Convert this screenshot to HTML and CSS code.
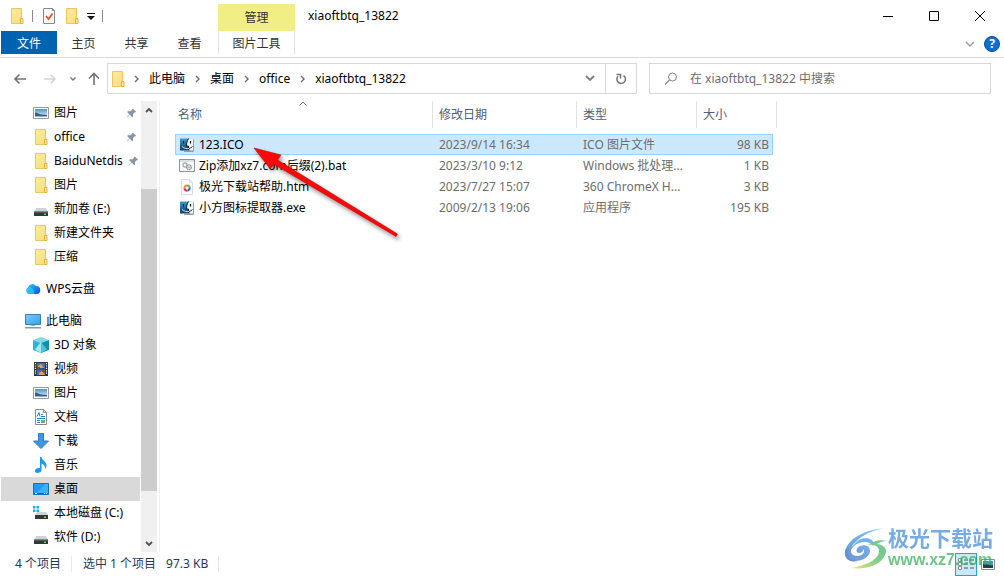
FILE: index.html
```html
<!DOCTYPE html>
<html lang="zh-CN">
<head>
    <meta charset="UTF-8">
    <meta name="viewport" content="width=device-width, initial-scale=1.0">
    <title>xiaoftbtq_13822</title>
    <link rel="stylesheet" href="styles.css">
</head>
<body>
    <!-- Shared icons -->
    <svg class="sprite" aria-hidden="true">
        <defs>
            <linearGradient id="gFolder" x1="0" y1="0" x2="1" y2="1">
                <stop offset="0" stop-color="#ffeaa3"/><stop offset="1" stop-color="#fcdc7c"/>
            </linearGradient>
            <linearGradient id="gCloud" x1="0" y1="0" x2="1" y2="1">
                <stop offset="0" stop-color="#27d3f5"/><stop offset="1" stop-color="#1447e6"/>
            </linearGradient>
            <linearGradient id="gScreen" x1="0" y1="0" x2="1" y2="1">
                <stop offset="0" stop-color="#7ccbfb"/><stop offset="1" stop-color="#2fa3f2"/>
            </linearGradient>
            <linearGradient id="gSky" x1="0" y1="0" x2="0" y2="1">
                <stop offset="0" stop-color="#4d92d8"/><stop offset="1" stop-color="#eaf4fb"/>
            </linearGradient>
            <linearGradient id="gFinder" x1="0" y1="0" x2="0" y2="1">
                <stop offset="0" stop-color="#3f9ccb"/><stop offset="1" stop-color="#0d3f66"/>
            </linearGradient>
            <linearGradient id="gSwirl" x1="0" y1="1" x2="1" y2="0">
                <stop offset="0" stop-color="#2f6cc4"/><stop offset=".7" stop-color="#3b9be8"/><stop offset="1" stop-color="#9ad0f5"/>
            </linearGradient>
            <linearGradient id="gLeaf" x1="0" y1="1" x2="1" y2="0">
                <stop offset="0" stop-color="#e3dc3a"/><stop offset=".5" stop-color="#4cbb58"/><stop offset="1" stop-color="#2cae6c"/>
            </linearGradient>
        </defs>
        <symbol id="folder" viewBox="0 0 16 16">
            <path d="M2.500 .5h10v10h1v5h-11z" fill="url(#gFolder)" stroke="#ecc75c"/>
            <path d="M11.500 10.500h2.500v5h-2.500z" fill="#ffe9a0" stroke="#dfb343"/>
        </symbol>
        <symbol id="picture" viewBox="0 0 16 16">
            <path d="M.5 2.500h15v11H.5z" fill="#fff" stroke="#9a9a9a"/>
            <path d="M2 4h12v8H2z" fill="url(#gSky)"/>
            <path d="M2 7.500c3 0 4 2 7 2l5 .5v1H2z" fill="#38655c"/>
            <path d="M2 11h12v1H2z" fill="#8fb8d5"/>
        </symbol>
        <symbol id="drive" viewBox="0 0 16 16">
            <path d="M3.500 7h9L15 10.500H1z" fill="#d0d1d4"/>
            <path d="M1 10.500h14V15H1z" fill="#343638"/>
            <path d="M1 10.500h14v1H1z" fill="#77797c"/>
            <path d="M11 12.500h2v1.500h-2z" fill="#4fe04c"/>
        </symbol>
        <symbol id="sysdrive" viewBox="0 0 16 16">
            <path d="M0 1h2.500v2.500H0zM3.500 1H6v2.500H3.500zM0 4.500h2.500V7H0zM3.500 4.500H6V7H3.500z" fill="#12b1ee"/>
            <path d="M4 7h9l2.500 3.500H1.500z" fill="#d0d1d4"/>
            <path d="M2 10h13v4H2z" fill="#343638"/>
            <path d="M11 11.500h2V13h-2z" fill="#4fe04c"/>
        </symbol>
        <symbol id="cloud" viewBox="0 0 16 16">
            <path d="M4 13A3.500 3.500 0 0 1 3 6.500 4.500 4.500 0 0 1 11 5a4 4 0 0 1 .5 8z" fill="url(#gCloud)"/>
            <path d="M4 13A3.500 3.500 0 0 1 4 6.300C7 6 9 8.500 9.500 13z" fill="#35c8f2" opacity=".75"/>
        </symbol>
        <symbol id="pc" viewBox="0 0 16 16">
            <path d="M.5 1.500h15v10H.5z" fill="url(#gScreen)" stroke="#3b7fab"/>
            <path d="M6 12h4v1H6z" fill="#9db4c4"/>
            <path d="M0 14h16v1.500H0z" fill="#7f9db2"/>
        </symbol>
        <symbol id="cube" viewBox="0 0 16 16">
            <path d="M8 0l8 3-8 3-8-3z" fill="#7fd9e8"/>
            <path d="M0 3l8 3v10l-8-3z" fill="#36b3cc"/>
            <path d="M16 3L8 6v10l8-3z" fill="#118fab"/>
            <path d="M8 5l-6 7.500L8 16z" fill="#a5e8f0"/>
            <path d="M8 5l6 7.500L8 16z" fill="#4cc2d6"/>
        </symbol>
        <symbol id="film" viewBox="0 0 16 16">
            <path d="M1 1h14v14H1z" fill="#333"/>
            <path d="M4 2h8v5.500H4zM4 8.500h8V14H4z" fill="#3c6fc4"/>
            <path d="M5 5l3-2 3 4H5zM6 12l3-2 3 4H6z" fill="#e8a33a"/>
            <path d="M4 6h3v1.500H4zM9 9h3v2H9z" fill="#a33d35"/>
            <path d="M2.500 2v12M13.500 2v12" stroke="#fff" stroke-width="1.200" stroke-dasharray="1.200 1.200"/>
        </symbol>
        <symbol id="doc" viewBox="0 0 16 16">
            <path d="M2.500 .5h8l3 3v12h-11z" fill="#fff" stroke="#8b8b8b"/>
            <path d="M10.500 .5v3h3" fill="none" stroke="#8b8b8b"/>
            <path d="M4 7.500l2-4 1 4M8 5.500h2M8 7.500h4M4 9.500h8M4 11.500h3M4 13.500h3" fill="none" stroke="#2186cf"/>
            <path d="M8 11h4v3H8z" fill="#7d9b94"/>
        </symbol>
        <symbol id="download" viewBox="0 0 16 16">
            <path d="M5.500 .5h5V8h5L8 15.500.5 8h5z" fill="#3f97e3" stroke="#2f7fc6"/>
        </symbol>
        <symbol id="music" viewBox="0 0 16 16">
            <path d="M7 0h1.500c.5 3.500 5 4.500 5 8.500 0 1.500-.5 2.500-1.500 3.500.5-3-1-4.500-3.500-5.500V13c0 3-6 4-6.500 1.500C1.600 12 4.500 10.500 7 11z" fill="#159af0"/>
        </symbol>
        <symbol id="desktop" viewBox="0 0 16 16">
            <path d="M.5 2.500h15v11H.5z" fill="#1e9bfa" stroke="#1273b8"/>
            <path d="M4 12L12 3h3v9z" fill="#3fb0ff"/>
            <path d="M1 12h14v1H1z" fill="#0b6cb8"/>
            <path d="M2 12.500h2M11 12.500h1M13 12.500h1" stroke="#fff"/>
        </symbol>
        <symbol id="pin" viewBox="0 0 12 12">
            <path d="M7.500 1L11 4.500l-1 .9-.6-.2-1.800 1.800.2 2.700-1 1L4.200 8 1 11.200l-.4-.4L3.700 7.500 1.200 5l1-1 2.700.2 1.800-1.800-.2-.6z" fill="#8696a3"/>
        </symbol>
        <symbol id="finder" viewBox="0 0 16 16">
            <path d="M1 1.500h13v12H1z" fill="url(#gFinder)"/>
            <path d="M9.500 1.500H14v12h-4V9H7.500c0-3 .6-5.500 2-7.500z" fill="#f1f6f8"/>
            <path d="M4.500 4v2.500M11.500 4v2.500" stroke="#0b1a26" stroke-width="1.200"/>
            <path d="M9.500 1.500C8 4 7.500 6 7.500 9h2c0 2 0 3 .5 4.500" fill="none" stroke="#0b1a26"/>
            <path d="M3 9.500c2 2 4.500 2.300 7 2" fill="none" stroke="#e1eef4" stroke-width=".9"/>
            <path d="M10 11.500c1.500-.3 2.500-1 3.500-2" fill="none" stroke="#0b1a26" stroke-width=".9"/>
            <path d="M14.500 2.500V14.500H5" fill="none" stroke="#9b9b9b"/>
        </symbol>
        <symbol id="batch" viewBox="0 0 16 16">
            <path d="M.5 1.500h15v12H.5z" fill="#f9fafb" stroke="#8f9396"/>
            <path d="M1 3h14" stroke="#c4c8cb"/>
            <circle cx="6" cy="7" r="2" fill="none" stroke="#a6b0b7" stroke-width="1.400"/>
            <circle cx="10" cy="9.300" r="2.300" fill="#fff" stroke="#87939b" stroke-width="1.400" stroke-dasharray="1.400 .4"/>
            <circle cx="10" cy="9.300" r="1" fill="#aab4bb"/>
        </symbol>
        <symbol id="html" viewBox="0 0 16 16">
            <path d="M2.500 .5h8l3 3v12h-11z" fill="#fcfcfc" stroke="#dcdcdc"/>
            <path d="M10.500 .5v3h3" fill="none" stroke="#dcdcdc"/>
            <g fill="none" stroke-width="2">
                <path d="M5.500 9.500A2.500 2.500 0 0 1 8 6.500" stroke="#f08a23"/>
                <path d="M8 6.500A2.600 2.600 0 0 1 10.600 8.500" stroke="#4fc13c"/>
                <path d="M10.600 8.500A2.600 2.600 0 0 1 8.500 11.600" stroke="#2b5de9"/>
                <path d="M8.500 11.600A2.600 2.600 0 0 1 5.500 9.300" stroke="#e8305c"/>
            </g>
        </symbol>
        <symbol id="crumb" viewBox="0 0 5 8">
            <path d="M1 1l3 3-3 3" fill="none" stroke="#6e6e6e" stroke-width="1.400"/>
        </symbol>
    </svg>

    <div class="window">
        <header class="titlebar">
            <div class="quick-access">
                <svg class="icon"><use href="#folder"/></svg>
                <span class="divider"></span>
                <button type="button" aria-label="属性">
                    <svg class="icon" viewBox="0 0 16 16">
                        <path d="M2.500 .5h9l2 2v13h-11z" fill="#f6f8fa" stroke="#828a90"/>
                        <path d="M11.500 .5v2h2" fill="none" stroke="#828a90"/>
                        <path d="M5 8l2.500 3L11.500 5.500" fill="none" stroke="#e8502a" stroke-width="1.800"/>
                    </svg>
                </button>
                <button type="button" aria-label="新建文件夹"><svg class="icon"><use href="#folder"/></svg></button>
                <button type="button" aria-label="自定义快速访问工具栏">
                    <svg class="qat-menu" viewBox="0 0 8 8"><path d="M0 1.500h8" stroke="#111"/><path d="M0 4h8L4 8z" fill="#111"/></svg>
                </button>
                <span class="divider"></span>
            </div>
            <div class="context-label">管理</div>
            <h1>xiaoftbtq_13822</h1>
            <div class="window-controls">
                <button type="button" aria-label="最小化"><svg viewBox="0 0 12 12"><path d="M1 6.500h10"/></svg></button>
                <button type="button" aria-label="最大化"><svg viewBox="0 0 12 12"><path d="M1.500 1.500h9v9h-9z"/></svg></button>
                <button type="button" aria-label="关闭"><svg viewBox="0 0 12 12"><path d="M1 1l10 10M11 1L1 11"/></svg></button>
            </div>
        </header>

        <nav class="ribbon">
            <button type="button" class="tab file">文件</button>
            <button type="button" class="tab">主页</button>
            <button type="button" class="tab">共享</button>
            <button type="button" class="tab">查看</button>
            <button type="button" class="tab context">图片工具</button>
            <div class="ribbon-end">
                <button type="button" aria-label="展开功能区"><svg width="10" height="6" viewBox="0 0 10 6"><path d="M1 1l4 4 4-4" fill="none" stroke="#9a9a9a" stroke-width="1.300"/></svg></button>
                <button type="button" class="help" aria-label="帮助">?</button>
            </div>
        </nav>

        <div class="toolbar">
            <div class="history">
                <button type="button" aria-label="后退"><svg width="14" height="12" viewBox="0 0 14 12"><path d="M13 6H2M6.500 1.500L2 6l4.500 4.500" fill="none" stroke="#737373" stroke-width="1.600"/></svg></button>
                <button type="button" aria-label="前进"><svg width="14" height="12" viewBox="0 0 14 12"><path d="M1 6h11M7.500 1.500L12 6l-4.500 4.500" fill="none" stroke="#d4d4d4" stroke-width="1.600"/></svg></button>
                <button type="button" class="recent" aria-label="最近浏览的位置"><svg width="8" height="6" viewBox="0 0 8 6"><path d="M1.500 1.500L4 4l2.500-2.500" fill="none" stroke="#777" stroke-width="1.400"/></svg></button>
                <button type="button" class="up" aria-label="上移"><svg width="12" height="14" viewBox="0 0 12 14"><path d="M6 13V2M1 6.500l5-5 5 5" fill="none" stroke="#737373" stroke-width="1.600"/></svg></button>
            </div>
            <div class="address">
                <svg class="icon"><use href="#folder"/></svg>
                <svg class="crumb"><use href="#crumb"/></svg>
                <a href="#">此电脑</a>
                <svg class="crumb"><use href="#crumb"/></svg>
                <a href="#">桌面</a>
                <svg class="crumb"><use href="#crumb"/></svg>
                <a href="#">office</a>
                <svg class="crumb"><use href="#crumb"/></svg>
                <a href="#">xiaoftbtq_13822</a>
                <button type="button" class="drop" aria-label="以前的位置"><svg width="10" height="7" viewBox="0 0 10 7"><path d="M1 1l4 4 4-4" fill="none" stroke="#7b7b7b" stroke-width="1.800"/></svg></button>
                <button type="button" class="refresh" aria-label="刷新"><svg width="12" height="12" viewBox="0 0 12 12"><path d="M8.500 2.500A4.300 4.300 0 1 1 3 3.200M1.500 1.500h4v4" fill="none" stroke="#757575" stroke-width="1.500"/></svg></button>
            </div>
            <div class="search">
                <svg width="14" height="14" viewBox="0 0 14 14"><circle cx="8.500" cy="5" r="4" fill="none" stroke="#8a8080"/><path d="M5.500 8L1 12.500" stroke="#8a8080" stroke-width="1.200"/></svg>
                <input type="text" aria-label="搜索" placeholder="在 xiaoftbtq_13822 中搜索">
            </div>
        </div>

        <main class="main">
            <nav class="tree">
                <ul>
                    <li><a href="#"><svg class="icon"><use href="#picture"/></svg>图片<svg class="pin"><use href="#pin"/></svg></a></li>
                    <li><a href="#"><svg class="icon"><use href="#folder"/></svg>office<svg class="pin"><use href="#pin"/></svg></a></li>
                    <li><a href="#"><svg class="icon"><use href="#folder"/></svg>BaiduNetdis<svg class="pin"><use href="#pin"/></svg></a></li>
                    <li><a href="#"><svg class="icon"><use href="#folder"/></svg>图片</a></li>
                    <li><a href="#"><svg class="icon"><use href="#drive"/></svg>新加卷 (E:)</a></li>
                    <li><a href="#"><svg class="icon"><use href="#folder"/></svg>新建文件夹</a></li>
                    <li><a href="#"><svg class="icon"><use href="#folder"/></svg>压缩</a></li>
                </ul>
                <ul>
                    <li class="root"><a href="#"><svg class="icon"><use href="#cloud"/></svg>WPS云盘</a></li>
                </ul>
                <ul>
                    <li class="root"><a href="#"><svg class="icon"><use href="#pc"/></svg>此电脑</a></li>
                    <li><a href="#"><svg class="icon"><use href="#cube"/></svg>3D 对象</a></li>
                    <li><a href="#"><svg class="icon"><use href="#film"/></svg>视频</a></li>
                    <li><a href="#"><svg class="icon"><use href="#picture"/></svg>图片</a></li>
                    <li><a href="#"><svg class="icon"><use href="#doc"/></svg>文档</a></li>
                    <li><a href="#"><svg class="icon"><use href="#download"/></svg>下载</a></li>
                    <li><a href="#"><svg class="icon"><use href="#music"/></svg>音乐</a></li>
                    <li class="current"><a href="#"><svg class="icon"><use href="#desktop"/></svg>桌面</a></li>
                    <li><a href="#"><svg class="icon"><use href="#sysdrive"/></svg>本地磁盘 (C:)</a></li>
                    <li><a href="#"><svg class="icon"><use href="#drive"/></svg>软件 (D:)</a></li>
                </ul>
            </nav>
            <div class="scrollbar">
                <button type="button" aria-label="向上滚动"><svg width="8" height="6" viewBox="0 0 8 6"><path d="M1 5l3-3 3 3" fill="none" stroke="#505050" stroke-width="1.800"/></svg></button>
                <div class="track"><div class="thumb"></div></div>
                <button type="button" aria-label="向下滚动"><svg width="8" height="6" viewBox="0 0 8 6"><path d="M1 1l3 3 3-3" fill="none" stroke="#505050" stroke-width="1.800"/></svg></button>
            </div>

            <section class="files">
                <table>
                    <colgroup>
                        <col class="col-name"><col class="col-date"><col class="col-type"><col class="col-size">
                    </colgroup>
                    <thead>
                        <tr>
                            <th class="name">名称<svg class="sort" viewBox="0 0 8 5"><path d="M.5 4.500L4 1l3.500 3.500" fill="none" stroke="#777"/></svg></th>
                            <th>修改日期</th>
                            <th>类型</th>
                            <th>大小</th>
                        </tr>
                    </thead>
                    <tbody>
                        <tr class="selected">
                            <td class="name"><div><svg class="icon"><use href="#finder"/></svg>123.ICO</div></td>
                            <td>2023/9/14 16:34</td>
                            <td>ICO 图片文件</td>
                            <td class="size">98 KB</td>
                        </tr>
                        <tr>
                            <td class="name"><div><svg class="icon"><use href="#batch"/></svg>Zip添加xz7.com后缀(2).bat</div></td>
                            <td>2023/3/10 9:12</td>
                            <td>Windows 批处理...</td>
                            <td class="size">1 KB</td>
                        </tr>
                        <tr>
                            <td class="name"><div><svg class="icon"><use href="#html"/></svg>极光下载站帮助.htm</div></td>
                            <td>2023/7/27 15:07</td>
                            <td>360 ChromeX H...</td>
                            <td class="size">3 KB</td>
                        </tr>
                        <tr>
                            <td class="name"><div><svg class="icon"><use href="#finder"/></svg>小方图标提取器.exe</div></td>
                            <td>2009/2/13 19:06</td>
                            <td>应用程序</td>
                            <td class="size">195 KB</td>
                        </tr>
                    </tbody>
                </table>
                <svg class="arrow" viewBox="0 0 160 104">
                    <path d="M4 8L31 15l-3.500 5L147.500 94l-1.500 2.500L24.500 24.500 20 28.500z" fill="#fb0808" stroke="#c80000" stroke-width=".6"/>
                </svg>
            </section>
        </main>

        <footer class="statusbar">
            <span class="count">4 个项目</span>
            <span class="picked">选中 1 个项目<span>97.3 KB</span></span>
            <div class="views">
                <button type="button" class="active" aria-label="详细信息">
                    <svg width="16" height="14" viewBox="0 0 16 14"><path d="M.5 1.500h3v3h-3zM.5 5.500h3v3h-3zM.5 9.500h3v3h-3z" fill="#fff" stroke="#8c8c8c"/><path d="M6 3h4M12 3h4M6 7h4M12 7h4M6 11h4M12 11h4" stroke="#555"/></svg>
                </button>
                <button type="button" aria-label="大图标">
                    <svg width="14" height="11" viewBox="0 0 14 11"><path d="M.5 .5h13v10H.5z" fill="#fff" stroke="#8c8c8c"/><path d="M2 2h10v7H2z" fill="#4c93d9"/><path d="M2 5c3-1 6 2 10 1v3H2z" fill="#24413d"/></svg>
                </button>
            </div>
        </footer>

        <div class="watermark">
            <svg width="44" height="42" viewBox="0 0 44 42">
                <path d="M42 1C24 2 9 9 3 19-2 28 2 34 11 34c8 0 15-5 15-10 0-5-5-7-10-5-4 2-5 6-1 7 3 0 5-2 4-4 3 3-1 7-6 7-6 0-8-5-4-9 5-6 17-7 20-1 3-7-7-10-15-6 6-6 16-10 28-12z" fill="url(#gSwirl)"/>
                <path d="M7 20C13 11 24 5 38 3 24 7 15 12 10 18z" fill="#fff" opacity=".55"/>
                <path d="M2 22c-3 9 3 14 12 12C6 34 3 30 5 22z" fill="#2f5fb8"/>
                <path d="M43 14c-7-2-14 0-19 4 6-1 11 1 11 6 0 8-11 14-28 17 15 2 30-3 34-13 3-6-1-10-8-11 3-2 6-3 10-3z" fill="url(#gLeaf)"/>
            </svg>
            <div>
                <strong>极光下载站</strong>
                <span>www.xz7.com</span>
            </div>
        </div>
    </div>
</body>
</html>
```

FILE: styles.css
```css
* {
    box-sizing: border-box;
}

body {
    margin: 0;
    background: #fff;
    color: #000;
    font-family: "Noto Sans", "Noto Sans CJK SC", sans-serif;
    font-size: 12px;
    line-height: 16px;
}

button {
    display: flex;
    align-items: center;
    justify-content: center;
    padding: 0;
    border: none;
    background: none;
    color: inherit;
    font: inherit;
}

a {
    color: inherit;
    text-decoration: none;
}

svg {
    display: block;
    flex: none;
}

.sprite {
    position: absolute;
    width: 0;
    height: 0;
}

.icon {
    width: 16px;
    height: 16px;
}

.window {
    position: relative;
    display: flex;
    flex-direction: column;
    min-height: 100vh;
}

/* Title bar */
.titlebar {
    display: flex;
    height: 31px;
}

.quick-access {
    display: flex;
    align-items: center;
    gap: 7px;
    width: 218px;
    padding-left: 9px;
}

.quick-access .divider {
    width: 1px;
    height: 12px;
    background: #8a8a8a;
}

.quick-access .divider + button {
    margin-left: 1px;
}

.qat-menu {
    width: 8px;
    height: 8px;
}

.context-label {
    display: flex;
    align-items: center;
    justify-content: center;
    width: 77px;
    margin-top: 4px;
    background: #f1ef83;
    color: #333;
}

.titlebar h1 {
    margin: 0;
    padding-left: 13px;
    font-size: 12px;
    font-weight: 400;
    line-height: 32px;
}

.window-controls {
    display: flex;
    margin-left: auto;
    padding-right: 1px;
}

.window-controls button {
    width: 46px;
}

.window-controls svg {
    width: 12px;
    height: 12px;
    fill: none;
    stroke: #000;
}

/* Ribbon */
.ribbon {
    display: flex;
    height: 27px;
    padding-left: 1px;
    border-bottom: 1px solid #dadbdc;
}

.tab {
    width: 53px;
    height: 23px;
    padding-top: 2px;
    color: #333;
}

.tab.file {
    width: 56px;
    background: #0063b1;
    color: #fff;
}

.tab.context {
    width: 77px;
    margin-left: 2px;
    border: solid #e4e4e4;
    border-width: 0 1px;
}

.ribbon-end {
    display: flex;
    align-items: center;
    gap: 9px;
    margin-left: auto;
    padding-right: 4px;
}

.help {
    width: 16px;
    height: 16px;
    border: 1px solid #0a4f95;
    border-radius: 50%;
    background: #0f6fd0;
    color: #fff;
    font-weight: 700;
}

/* Address row */
.toolbar {
    display: flex;
    padding: 5px 13px 7px;
}

.history {
    display: flex;
    flex: none;
    width: 94px;
}

.history button {
    flex: none;
    margin-right: 16px;
}

.history .recent {
    margin-right: 11px;
    margin-left: -4px;
}

.history .up {
    margin-right: 0;
}

.address,
.search {
    display: flex;
    align-items: center;
    height: 31px;
    border: 1px solid #d9d9d9;
}

.address {
    flex: 530 1 530px;
    padding-left: 2px;
}

.crumb {
    width: 5px;
    height: 8px;
    margin: 0 10px;
}

.address .icon + .crumb {
    margin-left: 8px;
}

.address .drop {
    width: 30px;
    height: 100%;
    margin-left: auto;
}

.address .refresh {
    width: 31px;
    height: 100%;
    border-left: 1px solid #d9d9d9;
}

.search {
    flex: 342 1 342px;
    margin-left: 12px;
    padding-left: 14px;
}

.search input {
    flex: 1;
    min-width: 0;
    margin-left: 12px;
    padding: 0;
    border: none;
    outline: none;
    background: none;
    font: inherit;
}

.search input::placeholder {
    color: #6d6d6d;
}

/* Navigation pane */
.main {
    display: flex;
    flex: 1;
}

.tree {
    flex: none;
    width: 140px;
    padding-left: 1px;
}

.tree ul {
    margin: 0 0 8px;
    padding: 0;
    list-style: none;
}

.tree ul:last-child {
    margin-bottom: 0;
}

.tree a {
    display: flex;
    align-items: center;
    gap: 5px;
    height: 24px;
    padding-right: 3px;
    padding-left: 32px;
    white-space: nowrap;
}

.tree .root a {
    padding-left: 24px;
}

.tree .current {
    background: #d9d9d9;
}

.pin {
    width: 11px;
    height: 12px;
    margin-left: auto;
}

.scrollbar {
    display: flex;
    flex: none;
    flex-direction: column;
    width: 17px;
    padding-left: 1px;
    background: #f0f0f0;
    background-clip: content-box;
}

.scrollbar button {
    height: 17px;
}

.track {
    display: flex;
    flex: 1;
    flex-direction: column;
}

.track::before {
    content: "";
    flex: 71;
}

.track::after {
    content: "";
    flex: 44;
}

.thumb {
    flex: 302;
    background: #cdcdcd;
}

/* File list */
.files {
    position: relative;
    flex: 1;
    margin-left: 2px;
    padding-left: 15px;
    border-left: 1px solid #f0f0f0;
}

table {
    width: 598px;
    border-collapse: collapse;
    table-layout: fixed;
}

.col-name {
    width: 258px;
}

.col-date {
    width: 144px;
}

.col-type {
    width: 120px;
}

th {
    position: relative;
    height: 33px;
    padding: 6px 0 0 6px;
    color: #4c607a;
    font-weight: 400;
    text-align: left;
    vertical-align: top;
}

th.name {
    padding-left: 3px;
}

th::after {
    content: "";
    position: absolute;
    top: 0;
    right: 0;
    width: 1px;
    height: 27px;
    background: #e2e2e2;
}

th:last-child::after {
    right: -4px;
}

.sort {
    position: absolute;
    top: 0;
    left: 124px;
    width: 8px;
    height: 5px;
}

td {
    height: 21px;
    padding: 0 0 0 6px;
    color: #6d6d6d;
    white-space: nowrap;
}

td.name {
    padding-left: 4px;
    color: #000;
}

td.name div {
    display: flex;
    align-items: center;
    gap: 4px;
}

td.size {
    padding-right: 4px;
    text-align: right;
}

.selected {
    background: #cce8ff;
    outline: 1px solid #99d1ff;
    outline-offset: -1px;
}

.arrow {
    position: absolute;
    top: 39px;
    left: 90px;
    width: 160px;
    height: 104px;
    filter: drop-shadow(2px 3px 2px rgba(0, 0, 0, 0.45));
}

/* Status bar */
.statusbar {
    display: flex;
    align-items: center;
    height: 24px;
    padding-left: 15px;
    color: #1e395b;
}

.count,
.picked {
    padding-right: 10px;
    border-right: 1px solid #e8e8e8;
}

.picked {
    padding-left: 11px;
}

.picked span {
    margin-left: 10px;
}

.views {
    display: flex;
    margin-left: auto;
    padding-right: 5px;
}

.views button {
    width: 22px;
    height: 23px;
}

.views .active {
    border: 1px solid #26a0da;
    background: #cbe8f6;
}

/* Site mark over the lower right corner */
.watermark {
    position: absolute;
    right: 11px;
    bottom: 6px;
    display: flex;
    align-items: center;
    opacity: 0.7;
    pointer-events: none;
}

.watermark strong,
.watermark span {
    display: block;
    font-weight: 700;
}

.watermark strong {
    color: #3f88d4;
    font-size: 21px;
    line-height: 24px;
}

.watermark span {
    color: #2fae55;
    font-family: "Liberation Sans", sans-serif;
    font-size: 16px;
    line-height: 20px;
}
```
